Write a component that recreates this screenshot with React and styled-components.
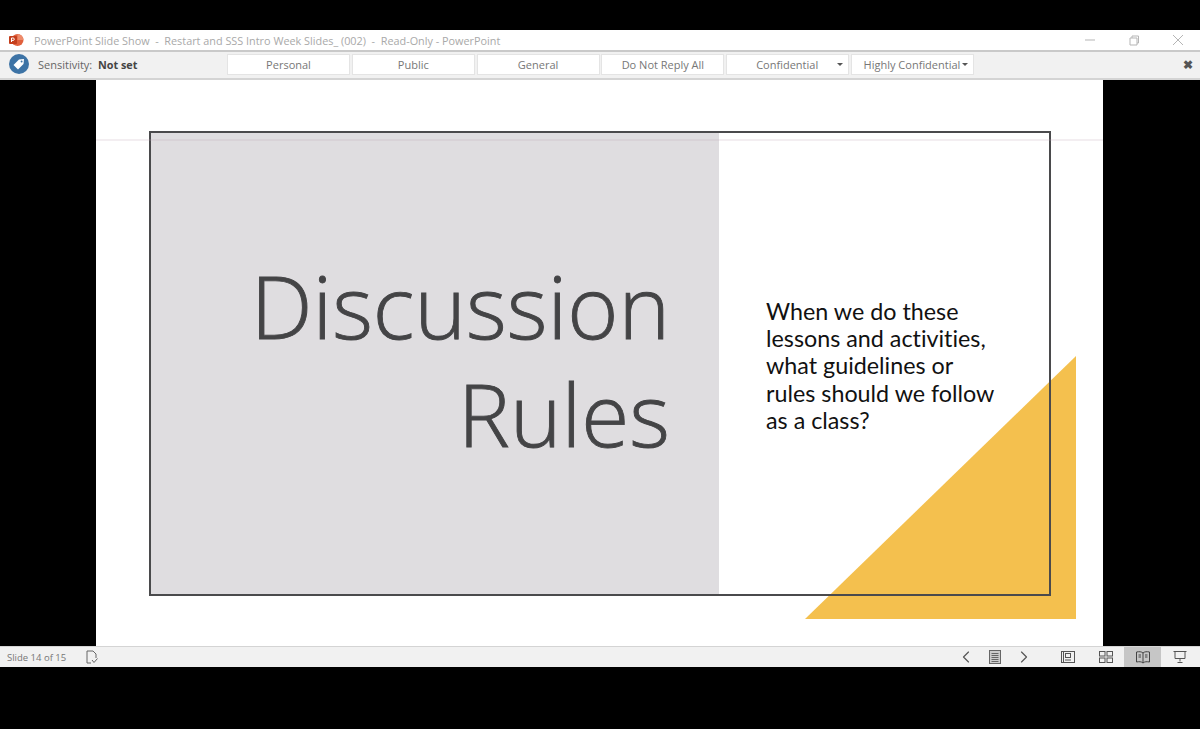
import styled, { createGlobalStyle } from "styled-components";
import { ChevronLeft, ChevronRight } from "lucide-react";

const GlobalStyle = createGlobalStyle`
    html, body {
        margin: 0;
        padding: 0;
        background: #000;
        font-family: "Open Sans", "Liberation Sans", sans-serif;
    }
`

//window chrome
const Page = styled.div`
    width: 1200px;
    height: 729px;
    background: #000;
    padding-top: 30px;
    box-sizing: border-box;
    overflow: hidden;
`

const TitleBar = styled.div`
    height: 20px;
    background: #fff;
    display: flex;
    align-items: center;
    padding-left: 8px;
    gap: 10px;
    border-bottom: 2px solid #c9c9c9;
    color: #a9a9a9;
    font-size: 10.85px;
`

const TitleText = styled.div`
    flex: 1;
    white-space: pre;
`

const WindowButtons = styled.div`
    display: flex;
    align-items: center;
    gap: 32px;
    padding-right: 16px;
    color: #b5b5b5;
`

const SensitivityBar = styled.div`
    padding-bottom: 2px;
    box-sizing: border-box;
    height: 28px;
    background: #f1f1f1;
    border-bottom: 2px solid #d4d4d4;
    display: flex;
    align-items: center;
    font-size: 11px;
    color: #666;
`

const TagBadge = styled.div`
    width: 20px;
    height: 20px;
    margin-left: 9px;
    display: flex;
`

const Label = styled.div`
    margin-left: 9px;
    width: 53px;
`

const NotSet = styled.div`
    margin-left: 7px;
    width: 129px;
    font-weight: 700;
    font-size: 10.8px;
    color: #444;
`

const LevelButtons = styled.div`
    display: flex;
    gap: 1.8px;
    flex: 1;
`

const LevelButton = styled.div`
    width: 123px;
    height: 21px;
    box-sizing: border-box;
    background: #fff;
    border: 1px solid #e4e4e4;
    display: flex;
    align-items: center;
    justify-content: center;
    color: #777;
    padding-left: ${props => props.$shift || 0}px;
`

const Caret = styled.span`
    width: 0;
    height: 0;
    border-left: 3px solid transparent;
    border-right: 3px solid transparent;
    border-top: 3px solid #555;
    margin-left: ${props => props.$gap}px;
`

const CloseBar = styled.div`
    font-size: 12px;
    font-weight: 700;
    color: #555;
    padding-right: 7px;
`

//slide area
const Stage = styled.div`
    height: 566px;
    background: #000;
    display: flex;
    padding-left: 96px;
`

const Slide = styled.div`
    width: 1007px;
    height: 566px;
    box-sizing: border-box;
    padding: 51px 52px 0 53px;
    background: #fff;
    position: relative;
`

const Rule = styled.div`
    position: absolute;
    left: 0;
    right: 0;
    top: 59px;
    height: 2px;
    background: rgba(190, 160, 175, 0.18);
`

const Triangle = styled.svg`
    position: absolute;
    left: 709px;
    top: 276px;
`

const Frame = styled.div`
    position: relative;
    height: 465px;
    box-sizing: border-box;
    border: 2px solid #4a4a4c;
    display: grid;
    grid-template-columns: 568px 1fr;
`

const GreyPanel = styled.div`
    background: #dfdde0;
    padding: 119px 49px 0 0;
    box-sizing: border-box;
`

const BigTitle = styled.div`
    font-family: "Open Sans", Lato, sans-serif;
    font-weight: 300;
    font-size: 87.4px;
    line-height: 108px;
    text-align: right;
    -webkit-text-stroke: 0.9px #444446;
    color: #444446;
`

const SideText = styled.div`
    padding: 165px 0 0 47px;
    font-family: Lato, "Open Sans", sans-serif;
    font-variant-ligatures: none;
    font-size: 23.3px;
    line-height: 27.2px;
    color: #111;
`

//status bar
const StatusBar = styled.div`
    height: 21px;
    background: #f1f1f1;
    border-top: 1px solid #d4d4d4;
    box-sizing: border-box;
    display: flex;
    align-items: center;
    font-size: 9.5px;
    color: #777;
    padding-left: 7px;
`

const SlideCount = styled.div`
    width: 78px;
`

const Spacer = styled.div`
    flex: 1;
`

const StatusIcon = styled.div`
    width: ${props => props.$width || 26}px;
    height: 20px;
    display: flex;
    align-items: center;
    justify-content: center;
    margin-left: ${props => props.$gap || 0}px;
    background: ${props => props.$active ? "#c6c6c6" : "transparent"};
    color: #555;
`

const levels = [
    { name: "Personal" },
    { name: "Public" },
    { name: "General" },
    { name: "Do Not Reply All" },
    { name: "Confidential", gap: 19, shift: 24 },
    { name: "Highly Confidential", gap: 2, shift: 7 },
]

export default function App() {
    return <>
        <GlobalStyle />
        <Page>
            <TitleBar>
                <svg width="16" height="16" viewBox="0 0 16 16">
                    <circle cx="9.5" cy="8" r="6" fill="#e0603c" />
                    <path d="M9.5 2a6 6 0 0 1 6 6h-6z" fill="#ed8b6b" />
                    <rect x="1" y="4" width="8" height="8" rx="1" fill="#c43e1c" />
                    <path d="M3.5 10V6h1.6a1.2 1.2 0 0 1 0 2.4H3.5" fill="none" stroke="#fff" strokeWidth="1" />
                </svg>
                <TitleText>PowerPoint Slide Show  -  Restart and SSS Intro Week Slides_ (002)  -  Read-Only - PowerPoint</TitleText>
                <WindowButtons>
                    <svg width="12" height="12" viewBox="0 0 12 12"><path d="M1 6h10" stroke="currentColor" fill="none" /></svg>
                    <svg width="12" height="12" viewBox="0 0 12 12"><path d="M2 4h7v7H2zM4 4V2h6.500v7H9" stroke="currentColor" fill="none" /></svg>
                    <svg width="12" height="12" viewBox="0 0 12 12"><path d="M1 1l10 10M11 1L1 11" stroke="currentColor" fill="none" /></svg>
                </WindowButtons>
            </TitleBar>
            <SensitivityBar>
                <TagBadge>
                    <svg width="20" height="20" viewBox="0 0 20 20">
                        <circle cx="10" cy="10" r="10" fill="#3d73a5" />
                        <path d="M4.500 11l5.500-5.500 5-.5-.5 5-5.500 5.500z" fill="#fff" />
                        <circle cx="12.600" cy="7.400" r="1" fill="#3d73a5" />
                    </svg>
                </TagBadge>
                <Label>Sensitivity:</Label>
                <NotSet>Not set</NotSet>
                <LevelButtons>
                    {levels.map((level) => {
                        return <LevelButton key={level.name} $shift={level.shift}>
                            {level.name}
                            {level.gap && <Caret $gap={level.gap} />}
                        </LevelButton>
                    })}
                </LevelButtons>
                <CloseBar>✖</CloseBar>
            </SensitivityBar>
            <Stage>
                <Slide>
                    <Triangle width="271" height="263" viewBox="0 0 271 263">
                        <polygon points="271,0 271,263 0,263" fill="#f4c04e" />
                    </Triangle>
                    <Frame>
                        <GreyPanel>
                            <BigTitle>Discussion<br />Rules</BigTitle>
                        </GreyPanel>
                        <SideText>
                            When we do these<br />
                            lessons and activities,<br />
                            what guidelines or<br />
                            rules should we follow<br />
                            as a class?
                        </SideText>
                    </Frame>
                    <Rule />
                </Slide>
            </Stage>
            <StatusBar>
                <SlideCount>Slide 14 of 15</SlideCount>
                <svg width="14" height="16" viewBox="0 0 14 16" fill="none" stroke="#666" strokeWidth="1">
                    <path d="M6 14H2V2h6l3 3v4" />
                    <path d="M7 11l2 2.500 3.500-4" />
                </svg>
                <Spacer />
                <StatusIcon><ChevronLeft size={20} strokeWidth={1.4} /></StatusIcon>
                <StatusIcon $gap={3}>
                    <svg width="14" height="16" viewBox="0 0 14 16" fill="#ccc" stroke="#666">
                        <rect x="1.500" y="1.500" width="11" height="13" />
                        <path d="M3.500 4.500h7M3.500 6.500h7M3.500 8.500h7M3.500 10.500h7M3.500 12.500h7" />
                    </svg>
                </StatusIcon>
                <StatusIcon $gap={3}><ChevronRight size={20} strokeWidth={1.4} /></StatusIcon>
                <StatusIcon $gap={18}>
                    <svg width="14" height="14" viewBox="0 0 14 14" fill="none" stroke="#555">
                        <rect x="0.500" y="1.500" width="13" height="11" />
                        <rect x="4.500" y="3.500" width="5" height="4" />
                        <path d="M2.500 2v10M4 10h6" />
                    </svg>
                </StatusIcon>
                <StatusIcon $gap={12}>
                    <svg width="14" height="14" viewBox="0 0 14 14" fill="none" stroke="#555">
                        <rect x="0.500" y="1.500" width="5.500" height="4.500" />
                        <rect x="8" y="1.500" width="5.500" height="4.500" />
                        <rect x="0.500" y="8" width="5.500" height="4.500" />
                        <rect x="8" y="8" width="5.500" height="4.500" />
                    </svg>
                </StatusIcon>
                <StatusIcon $width={37} $gap={5} $active>
                    <svg width="14" height="14" viewBox="0 0 14 14" fill="none" stroke="#444">
                        <path d="M7 3v10M7 3C5.500 1.500 3 1.500 0.500 2v10c2.500-.5 5-.5 6.500 1 1.500-1.500 4-1.500 6.500-1V2C11 1.500 8.500 1.500 7 3z" />
                        <path d="M2.500 5h2.500M2.500 7h2.500M9 5h2.500M9 7h2.500" />
                    </svg>
                </StatusIcon>
                <StatusIcon $gap={6}>
                    <svg width="14" height="14" viewBox="0 0 14 14" fill="none" stroke="#555">
                        <path d="M0.500 1.500h13M2 1.500v7h10v-7M7 8.500v3M4.500 12.500h5" />
                    </svg>
                </StatusIcon>
                <StatusIcon $width={7} />
            </StatusBar>
        </Page>
    </>
}
